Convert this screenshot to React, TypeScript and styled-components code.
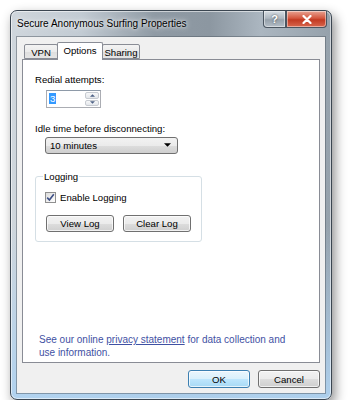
import React from 'react';
import styled, { createGlobalStyle } from 'styled-components';

const GlobalStyle = createGlobalStyle`
  html, body {
    margin: 0;
    padding: 0;
    background: #ffffff;
  }
  body {
    font-family: "Liberation Sans", Arial, sans-serif;
    font-size: 9.6px;
    color: #000;
  }
`;

// ---------------------------------------------
// window frame
// ---------------------------------------------
const Window = styled.div`
  box-sizing: border-box;
  width: 322px;
  height: 390px;
  margin: 10px 0 0 10px;
  display: flex;
  flex-direction: column;
  border: 1px solid #3b4651;
  border-radius: 7px;
  background:
    linear-gradient(180deg, rgba(255, 255, 255, 0) 55%, rgba(175, 210, 240, 0.95) 100%),
    linear-gradient(90deg, #cfd6dc 0%, #c2cbd3 22%, #8f9aa4 45%, #8c97a1 62%, #abb6c0 78%, #95a1ab 100%);
  box-shadow:
    inset 0 0 0 1px rgba(255, 255, 255, 0.55),
    3px 5px 12px rgba(0, 0, 0, 0.45);
`;

const TitleBar = styled.div`
  height: 26px;
  display: flex;
  align-items: flex-start;
  padding-left: 6px;
`;

const Title = styled.span`
  margin-top: 6px;
  font-size: 10px;
  line-height: 13px;
  color: #000;
  text-shadow: 0 0 6px rgba(255, 255, 255, 0.95), 0 0 3px rgba(255, 255, 255, 0.8);
`;

const Controls = styled.div`
  margin-left: auto;
  margin-right: 4px;
  display: flex;
`;

const CaptionButton = styled.div<{ $close?: boolean }>`
  box-sizing: border-box;
  width: ${(p) => (p.$close ? 41 : 23)}px;
  height: 17px;
  display: flex;
  align-items: center;
  justify-content: center;
  border: 1px solid #4a5560;
  border-top: none;
  border-radius: ${(p) => (p.$close ? '0 0 4px 0' : '0 0 0 4px')};
  background: ${(p) =>
    p.$close
      ? 'linear-gradient(180deg, #e8a493 0%, #d4573f 45%, #c23a22 55%, #d8674e 100%)'
      : 'linear-gradient(180deg, #d7dde3 0%, #aeb8c1 45%, #96a1ab 55%, #b4bec7 100%)'};
  box-shadow: inset 0 0 0 1px rgba(255, 255, 255, 0.45);
  color: #fff;
  font-weight: bold;
  font-size: 11px;
  text-shadow: 0 0 2px rgba(0, 0, 0, 0.7);
`;

// ---------------------------------------------
// client area
// ---------------------------------------------
const Client = styled.div`
  flex: 1;
  margin: 0 6px 6px 6px;
  display: flex;
  flex-direction: column;
  padding: 5px;
  background: #f0f0f0;
  box-shadow: 0 0 0 1px rgba(80, 90, 100, 0.5);
`;

const TabRow = styled.div`
  display: flex;
  align-items: flex-end;
  height: 17px;
  padding-left: 2px;
  position: relative;
  z-index: 1;
`;

const Tab = styled.div<{ $active?: boolean; $width: number }>`
  box-sizing: border-box;
  width: ${(p) => p.$width}px;
  height: ${(p) => (p.$active ? 18 : 15)}px;
  margin: 0 ${(p) => (p.$active ? -1 : 0)}px ${(p) => (p.$active ? -1 : 0)}px;
  padding-top: 2px;
  text-align: center;
  white-space: nowrap;
  line-height: 11px;
  border: 1px solid #898c95;
  border-bottom: ${(p) => (p.$active ? 'none' : '1px solid #898c95')};
  border-radius: 2px 2px 0 0;
  background: ${(p) =>
    p.$active ? '#ffffff' : 'linear-gradient(180deg, #f3f3f3 0%, #ebebeb 50%, #dedede 51%, #e5e5e5 100%)'};
  z-index: ${(p) => (p.$active ? 2 : 0)};
  position: relative;
`;

const Panel = styled.div`
  flex: 1;
  display: flex;
  flex-direction: column;
  padding: 13px 12px 3px 12px;
  border: 1px solid #898c95;
  background: #ffffff;
`;

const Label = styled.div<{ $gap?: number }>`
  margin-top: ${(p) => p.$gap ?? 0}px;
  line-height: 13px;
`;

const SpinBox = styled.div`
  box-sizing: border-box;
  width: 55px;
  height: 18px;
  margin: 4px 0 0 11px;
  display: flex;
  border: 1px solid #abadb3;
  border-top-color: #8e9aa8;
  background: #fff;
`;

const SpinValue = styled.div`
  flex: 1;
  padding: 2px 0 0 2px;
  line-height: 12px;
`;

const Selected = styled.span`
  background: #3399ff;
  color: #fff;
  padding: 0 1px;
`;

const Spinners = styled.div`
  width: 14px;
  display: flex;
  flex-direction: column;
  gap: 1px;
  padding: 1px;
`;

const SpinButton = styled.div`
  flex: 1;
  display: flex;
  align-items: center;
  justify-content: center;
  border: 1px solid #c7cbd1;
  border-radius: 2px;
  background: linear-gradient(180deg, #f7f8f9 0%, #e4e7eb 100%);
`;

const Combo = styled.div`
  box-sizing: border-box;
  width: 133px;
  height: 17px;
  margin: 2px 0 0 10px;
  padding: 0 6px 0 4px;
  display: flex;
  align-items: center;
  justify-content: space-between;
  border: 1px solid #707070;
  border-radius: 3px;
  background: linear-gradient(180deg, #f2f2f2 0%, #ebebeb 50%, #dddddd 51%, #cfcfcf 100%);
`;

const Group = styled.fieldset`
  box-sizing: border-box;
  width: 167px;
  height: 72px;
  margin: 16px 0 0 0;
  padding: 0 10px;
  border: 1px solid #d5dfe5;
  border-radius: 3px;
  display: flex;
  flex-direction: column;
  min-width: 0;
`;

const Legend = styled.legend`
  margin-left: -3px;
  padding: 0 1px;
  line-height: 13px;
`;

const CheckRow = styled.label`
  margin-top: 8px;
  display: flex;
  align-items: center;
  gap: 4px;
  line-height: 13px;
`;

const CheckBox = styled.span`
  box-sizing: border-box;
  width: 11px;
  height: 11px;
  margin-left: -1px;
  display: flex;
  align-items: center;
  justify-content: center;
  border: 1px solid #8f8f8f;
  background: linear-gradient(135deg, #dcdcdc 0%, #ffffff 100%);
`;

const ButtonRow = styled.div<{ $gap: number; $top?: number }>`
  margin-top: ${(p) => p.$top ?? 0}px;
  display: flex;
  gap: ${(p) => p.$gap}px;
`;

const Button = styled.div<{ $default?: boolean; $w: number; $h: number }>`
  box-sizing: border-box;
  width: ${(p) => p.$w}px;
  height: ${(p) => p.$h}px;
  display: flex;
  align-items: center;
  justify-content: center;
  border: 1px solid ${(p) => (p.$default ? '#3c7fb1' : '#707070')};
  border-radius: 3px;
  background: ${(p) =>
    p.$default
      ? 'linear-gradient(180deg, #eaf6fd 0%, #d9f0fc 50%, #bee6fd 51%, #a7d9f5 100%)'
      : 'linear-gradient(180deg, #f2f2f2 0%, #ebebeb 50%, #dddddd 51%, #cfcfcf 100%)'};
  box-shadow: inset 0 0 0 1px rgba(255, 255, 255, 0.7);
`;

const Privacy = styled.p`
  margin: auto 0 0 4px;
  font-size: 10px;
  line-height: 13px;
  color: #3f51a3;
`;

const Link = styled.span`
  text-decoration: underline;
`;

const Footer = styled.div`
  display: flex;
  justify-content: flex-end;
  padding-top: 7px;
`;

// ---------------------------------------------
// drawings
// ---------------------------------------------
const Arrow = ({ up, size = 5, color = '#4d6185' }: { up?: boolean; size?: number; color?: string }) => (
  <svg width={size} height={Math.ceil(size / 2) + 1} viewBox="0 0 6 4">
    <path d={up ? 'M0 4 L3 1 L6 4 Z' : 'M0 0 L6 0 L3 3 Z'} fill={color} />
  </svg>
);

const Check = () => (
  <svg width="9" height="9" viewBox="0 0 9 9">
    <path d="M1.2 4.6 L3.4 7 L7.8 1.2" fill="none" stroke="#3d4f86" strokeWidth="1.6" />
  </svg>
);

const CloseGlyph = () => (
  <svg width="10" height="9" viewBox="0 0 10 9">
    <path d="M1.5 1 L8.5 8 M8.5 1 L1.5 8" stroke="#fff" strokeWidth="2.2" strokeLinecap="round" />
  </svg>
);

export default function App() {
  return (
    <>
      <GlobalStyle />
      <Window>
        <TitleBar>
          <Title>Secure Anonymous Surfing Properties</Title>
          <Controls>
            <CaptionButton>?</CaptionButton>
            <CaptionButton $close>
              <CloseGlyph />
            </CaptionButton>
          </Controls>
        </TitleBar>

        <Client>
          <TabRow>
            <Tab $width={34}>VPN</Tab>
            <Tab $width={46} $active>
              Options
            </Tab>
            <Tab $width={38}>Sharing</Tab>
          </TabRow>

          <Panel>
            <Label>Redial attempts:</Label>
            <SpinBox>
              <SpinValue>
                <Selected>3</Selected>
              </SpinValue>
              <Spinners>
                <SpinButton>
                  <Arrow up />
                </SpinButton>
                <SpinButton>
                  <Arrow />
                </SpinButton>
              </Spinners>
            </SpinBox>

            <Label $gap={14}>Idle time before disconnecting:</Label>
            <Combo>
              <span>10 minutes</span>
              <Arrow size={7} color="#000" />
            </Combo>

            <Group>
              <Legend>Logging</Legend>
              <CheckRow>
                <CheckBox>
                  <Check />
                </CheckBox>
                Enable Logging
              </CheckRow>
              <ButtonRow $gap={9} $top={11}>
                <Button $w={68} $h={17}>
                  View Log
                </Button>
                <Button $w={68} $h={17}>
                  Clear Log
                </Button>
              </ButtonRow>
            </Group>

            <Privacy>
              See our online <Link>privacy statement</Link> for data collection and
              <br />
              use information.
            </Privacy>
          </Panel>

          <Footer>
            <ButtonRow $gap={8}>
              <Button $default $w={62} $h={18}>
                OK
              </Button>
              <Button $w={62} $h={18}>
                Cancel
              </Button>
            </ButtonRow>
          </Footer>
        </Client>
      </Window>
    </>
  );
}
